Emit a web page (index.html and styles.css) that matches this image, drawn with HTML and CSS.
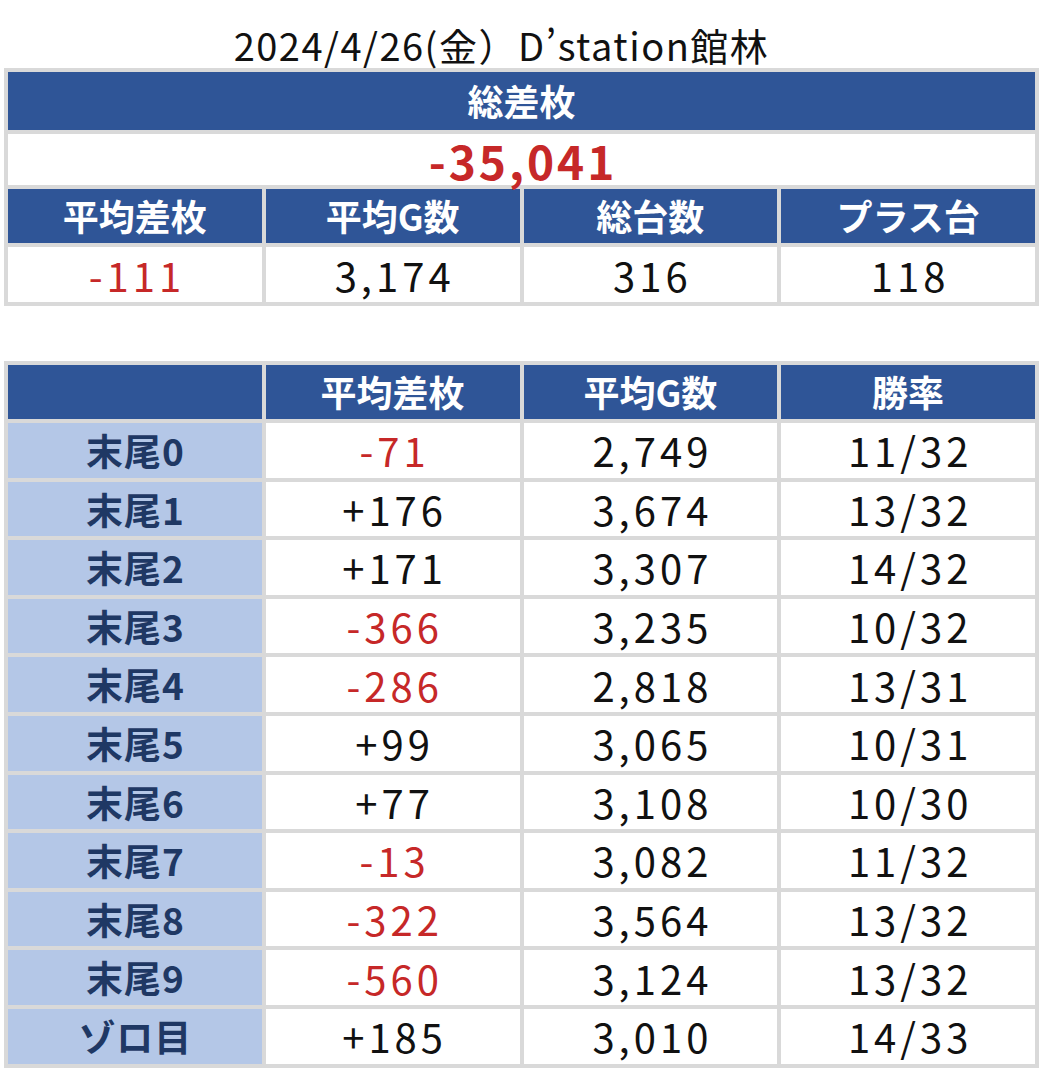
FILE: index.html
```html
<!DOCTYPE html>
<html lang="ja">
<head>
<meta charset="utf-8">
<link rel="stylesheet" href="styles.css">
</head>
<body>
<div class="page">
  <h1 class="title">2024/4/26(金）D’station館林</h1>
  <table class="grid summary">
    <tr class="band"><th colspan="4">総差枚</th></tr>
    <tr class="total"><td colspan="4" class="neg">-35,041</td></tr>
    <tr class="head"><th>平均差枚</th><th>平均G数</th><th>総台数</th><th>プラス台</th></tr>
    <tr class="vals"><td class="neg">-111</td><td>3,174</td><td>316</td><td>118</td></tr>
  </table>

  <table class="grid detail">
    <tr class="head"><th></th><th>平均差枚</th><th>平均G数</th><th>勝率</th></tr>
    <tr><td class="label">末尾0</td><td class="neg">-71</td><td>2,749</td><td>11/32</td></tr>
    <tr><td class="label">末尾1</td><td>+176</td><td>3,674</td><td>13/32</td></tr>
    <tr><td class="label">末尾2</td><td>+171</td><td>3,307</td><td>14/32</td></tr>
    <tr><td class="label">末尾3</td><td class="neg">-366</td><td>3,235</td><td>10/32</td></tr>
    <tr><td class="label">末尾4</td><td class="neg">-286</td><td>2,818</td><td>13/31</td></tr>
    <tr><td class="label">末尾5</td><td>+99</td><td>3,065</td><td>10/31</td></tr>
    <tr><td class="label">末尾6</td><td>+77</td><td>3,108</td><td>10/30</td></tr>
    <tr><td class="label">末尾7</td><td class="neg">-13</td><td>3,082</td><td>11/32</td></tr>
    <tr><td class="label">末尾8</td><td class="neg">-322</td><td>3,564</td><td>13/32</td></tr>
    <tr><td class="label">末尾9</td><td class="neg">-560</td><td>3,124</td><td>13/32</td></tr>
    <tr><td class="label">ゾロ目</td><td>+185</td><td>3,010</td><td>14/33</td></tr>
  </table>
</div>
</body>
</html>
```

FILE: styles.css
```css
html, body {
  margin: 0;
  padding: 0;
  background: #ffffff;
}

body {
  font-family: "Noto Sans CJK JP", "Noto Sans", sans-serif;
  color: #111111;
}

.page {
  width: 1035px;
  padding: 0 0 0 4px;
}

.title {
  margin: 0;
  padding: 22px 40px 0 0;
  height: 46px;
  font-size: 38px;
  font-weight: 400;
  line-height: 46px;
  text-align: center;
  letter-spacing: 1.5px;
  color: #111111;
}

.grid {
  width: 1035px;
  table-layout: fixed;
  border-collapse: separate;
  border-spacing: 4px;
  background: #d9d9d9;
}

.grid th,
.grid td {
  padding: 0;
  text-align: center;
  vertical-align: middle;
  white-space: nowrap;
}

.grid th {
  background: #2f5597;
  color: #ffffff;
  font-weight: 700;
  font-size: 36px;
  line-height: 1.2;
}

.grid td {
  background: #ffffff;
  color: #111111;
  font-size: 40px;
  font-weight: 400;
  line-height: 1.2;
  letter-spacing: 4px;
  padding-left: 4px;
}

.grid td.neg {
  color: #c62828;
}

.summary .band th {
  height: 58px;
}

.summary .total td {
  height: 51px;
  font-size: 46px;
  font-weight: 700;
  line-height: 1;
  letter-spacing: 3px;
  padding-left: 3px;
}

.summary .head th {
  height: 54px;
}

.summary .vals td {
  height: 55px;
}

.detail {
  margin-top: 55px;
}

.detail .head th {
  height: 54px;
}

.detail td {
  height: 54.6px;
}

.detail td.label {
  background: #b4c7e7;
  color: #1f3864;
  font-size: 37px;
  font-weight: 700;
  letter-spacing: 1px;
  padding-left: 1px;
}
```
